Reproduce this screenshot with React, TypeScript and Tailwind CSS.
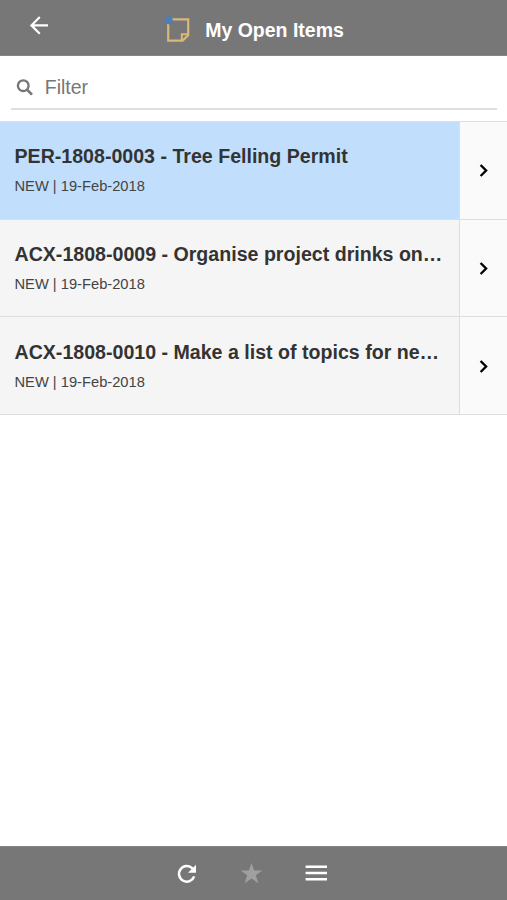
type Item = {
  title: string;
  status: string;
  date: string;
  selected?: boolean;
};

const items: Item[] = [
  { title: "PER-1808-0003 - Tree Felling Permit", status: "NEW", date: "19-Feb-2018", selected: true },
  { title: "ACX-1808-0009 - Organise project drinks on…", status: "NEW", date: "19-Feb-2018" },
  { title: "ACX-1808-0010 - Make a list of topics for ne…", status: "NEW", date: "19-Feb-2018" },
];

const BackIcon = () => (
  <svg className="h-5 w-5" viewBox="0 0 20 20" fill="none" stroke="currentColor" strokeWidth="2.2" aria-hidden>
    <path d="M19 10.4H2.8M10.8 2 2.4 10.4l8.4 8.4" />
  </svg>
);

const NoteIcon = () => (
  <svg className="h-7 w-7" viewBox="0 0 28 28" fill="none" aria-hidden>
    <path d="M5.2 3.4h20v15.8l-5.6 5.4H5.2z" stroke="#d9b878" strokeWidth="2.2" />
    <path d="M25.2 18.2h-6.4v6.4" stroke="#d9b878" strokeWidth="2" />
    <circle cx="5.7" cy="4.2" r="4" fill="#4d7eb8" />
  </svg>
);

const SearchIcon = () => (
  <svg className="h-5 w-5" viewBox="0 0 20 20" fill="none" stroke="currentColor" aria-hidden>
    <circle cx="8.8" cy="8.6" r="5.7" strokeWidth="2.5" />
    <path d="m12.8 12.8 5.3 5.3" strokeWidth="2.9" />
  </svg>
);

const ChevronIcon = () => (
  <svg className="h-4 w-4" viewBox="0 0 16 16" fill="none" stroke="currentColor" strokeWidth="2.4" aria-hidden>
    <path d="m4.6 3 5.5 5.5L4.6 14" />
  </svg>
);

const RefreshIcon = () => (
  <svg className="h-6 w-6" viewBox="0 0 24 24" fill="none" aria-hidden>
    <path d="M19.2 14.4A7.8 7.8 0 1 1 17.4 6.4l1 1" stroke="currentColor" strokeWidth="2.5" />
    <path d="M21 2.8v8h-8z" fill="currentColor" />
  </svg>
);

const StarIcon = () => (
  <svg className="h-6 w-6" viewBox="0 0 24 24" fill="currentColor" aria-hidden>
    <path d="m11.5.9 2.6 7.5h8.2l-6.5 4.8 2.5 8-6.8-4.8-6.8 4.8 2.5-8L.7 8.4h8.2z" />
  </svg>
);

const MenuIcon = () => (
  <svg className="h-6 w-6" viewBox="0 0 24 24" fill="none" stroke="currentColor" strokeWidth="2.4" aria-hidden>
    <path d="M.6 4.7H22M.6 11H22M.6 17.2H22" />
  </svg>
);

const Header = () => (
  <header className="grid h-14 shrink-0 grid-cols-[1fr_auto_1fr] items-center border-b border-[#858585] bg-[#777] text-white">
    <button aria-label="Back" className="mb-1.5 ml-[29px] justify-self-start">
      <BackIcon />
    </button>
    <div className="flex items-center gap-3.5 pt-1">
      <NoteIcon />
      <h1 className="text-[19.5px] leading-6 font-bold">My Open Items</h1>
    </div>
  </header>
);

const Filter = () => (
  <div className="h-[65px] shrink-0 pr-2.5 pl-[11px]">
    <label className="flex h-[54px] items-center gap-[11px] border-b-2 border-[#dedede] pt-2.5 pl-1 text-[#777]">
      <SearchIcon />
      <input
        placeholder="Filter"
        className="w-full text-[19.5px] leading-6 outline-none placeholder:text-[#777]"
      />
    </label>
  </div>
);

const Row = ({ title, status, date, selected }: Item) => (
  <li className="flex h-[97.7px] border-b border-[#dedede]">
    <div className={`min-w-0 flex-1 px-[14.5px] pt-[21.2px] ${selected ? "bg-[#c1dffd]" : "bg-[#f5f5f5]"}`}>
      <h2 className="text-[19.6px] leading-[26px] font-bold whitespace-nowrap text-[#333]">{title}</h2>
      <p className="mt-[7.2px] text-[14.7px] leading-5 text-[#444]">
        {status} | {date}
      </p>
    </div>
    <button aria-label="Open" className="flex w-12 items-center justify-center border-l border-[#dedede] bg-[#fafafa] text-black">
      <ChevronIcon />
    </button>
  </li>
);

const Footer = () => (
  <footer className="flex h-[54px] shrink-0 items-center justify-center gap-[41px] border-t border-[#858585] bg-[#777] pr-1 text-white">
    <button aria-label="Refresh">
      <RefreshIcon />
    </button>
    <button aria-label="Favourite" className="text-[#a0a0a0]">
      <StarIcon />
    </button>
    <button aria-label="Menu">
      <MenuIcon />
    </button>
  </footer>
);

export default function App() {
  return (
    <div className="flex h-screen w-full flex-col overflow-hidden bg-white font-['Liberation_Sans',Arial,sans-serif]">
      <Header />
      <Filter />
      <ul className="flex-1 border-t border-[#dedede]">
        {items.map((item) => (
          <Row key={item.title} {...item} />
        ))}
      </ul>
      <Footer />
    </div>
  );
}
